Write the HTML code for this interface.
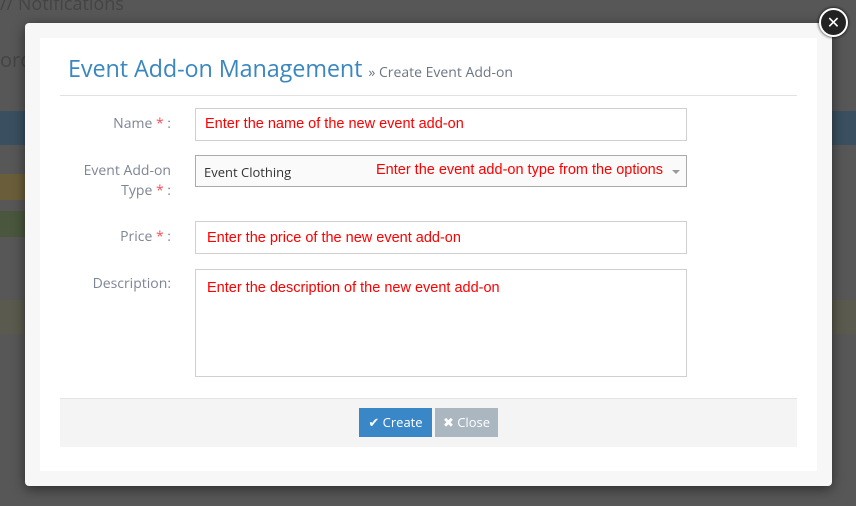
<!DOCTYPE html>
<html><head><style>
body{margin:0;width:856px;height:506px;background:#575757;position:relative;overflow:hidden;font-family:"Open Sans","Liberation Sans",sans-serif;}
.abs{position:absolute}
.modal{left:25px;top:23px;width:807px;height:463px;background:#f7f7f7;border-radius:4px;box-shadow:0 3px 12px rgba(0,0,0,.5)}
.inner{left:40px;top:38px;width:777px;height:433px;background:#fff}
.lbl{color:#7d8595;font-size:14px;text-align:right;width:171px;left:0;line-height:20px}
.lbl b{color:#f2545b;font-weight:normal}
.inp{border:1px solid #d0d0d0;background:#fff;left:195px;width:490px}
.red{color:#f00;font-family:"Liberation Sans",sans-serif;font-size:14.5px}
</style></head><body>
<div class="abs" style="left:0;top:-8px;color:#444;font-size:18px">// Notifications</div>
<div class="abs" style="left:0;top:46px;color:#444;font-size:20px">ord</div>
<div class="abs" style="left:0;top:111px;width:30px;height:34px;background:#3a4f60"></div>
<div class="abs" style="left:820px;top:111px;width:36px;height:34px;background:#3a4f60"></div>
<div class="abs" style="left:0;top:174px;width:30px;height:26px;background:#6a5e3a"></div>
<div class="abs" style="left:0;top:211px;width:30px;height:26px;background:#4a563d"></div>
<div class="abs" style="left:0;top:300px;width:856px;height:34px;background:#5a5a4e"></div>
<div class="abs modal"></div>
<div class="abs inner"></div>
<div class="abs" style="left:68px;top:52px;color:#3a87c0;font-size:23.4px;letter-spacing:-0.1px">Event Add-on Management <span style="font-size:14px;color:#6c7585;letter-spacing:0">» Create Event Add-on</span></div>
<div class="abs" style="left:60px;top:95px;width:737px;height:1px;background:#e2e2e2"></div>
<div class="abs lbl" style="top:114px">Name <b>*</b> :</div>
<div class="abs inp" style="top:108px;height:31px"></div>
<div class="abs red" style="left:205px;top:116px">Enter the name of the new event add-on</div>
<div class="abs lbl" style="top:161px">Event Add-on<br>Type <b>*</b> :</div>
<div class="abs inp" style="top:155px;height:30px;background:#fafafa;border-color:#aaa"></div>
<div class="abs" style="left:204px;top:163px;font-size:13px;color:#333">Event Clothing</div>
<div class="abs red" style="left:376px;top:162px">Enter the event add-on type from the options</div>
<div class="abs" style="left:672px;top:170px;width:0;height:0;border-left:4px solid transparent;border-right:4px solid transparent;border-top:4px solid #999"></div>
<div class="abs lbl" style="top:227px">Price <b>*</b> :</div>
<div class="abs inp" style="top:221px;height:31px"></div>
<div class="abs red" style="left:207px;top:230px">Enter the price of the new event add-on</div>
<div class="abs lbl" style="top:274px">Description:</div>
<div class="abs inp" style="top:269px;height:106px"></div>
<div class="abs red" style="left:207px;top:280px">Enter the description of the new event add-on</div>
<div class="abs" style="left:60px;top:398px;width:737px;height:48px;background:#f4f4f4;border-top:1px solid #e4e4e4"></div>
<div class="abs" style="left:359px;top:408px;width:73px;height:29px;background:#3a87c8;color:#fff;font-size:13px;line-height:29px;text-align:center">✔ Create</div>
<div class="abs" style="left:435px;top:408px;width:63px;height:29px;background:#abb7c0;color:#fff;font-size:13px;line-height:29px;text-align:center">✖ Close</div>
<div class="abs" style="left:819px;top:8px;width:25px;height:25px;border-radius:50%;background:#222;border:2px solid #fff;box-shadow:0 0 3px #000;color:#fff;font:bold 16px/25px 'DejaVu Sans',sans-serif;text-align:center">✕</div>
</body></html>
